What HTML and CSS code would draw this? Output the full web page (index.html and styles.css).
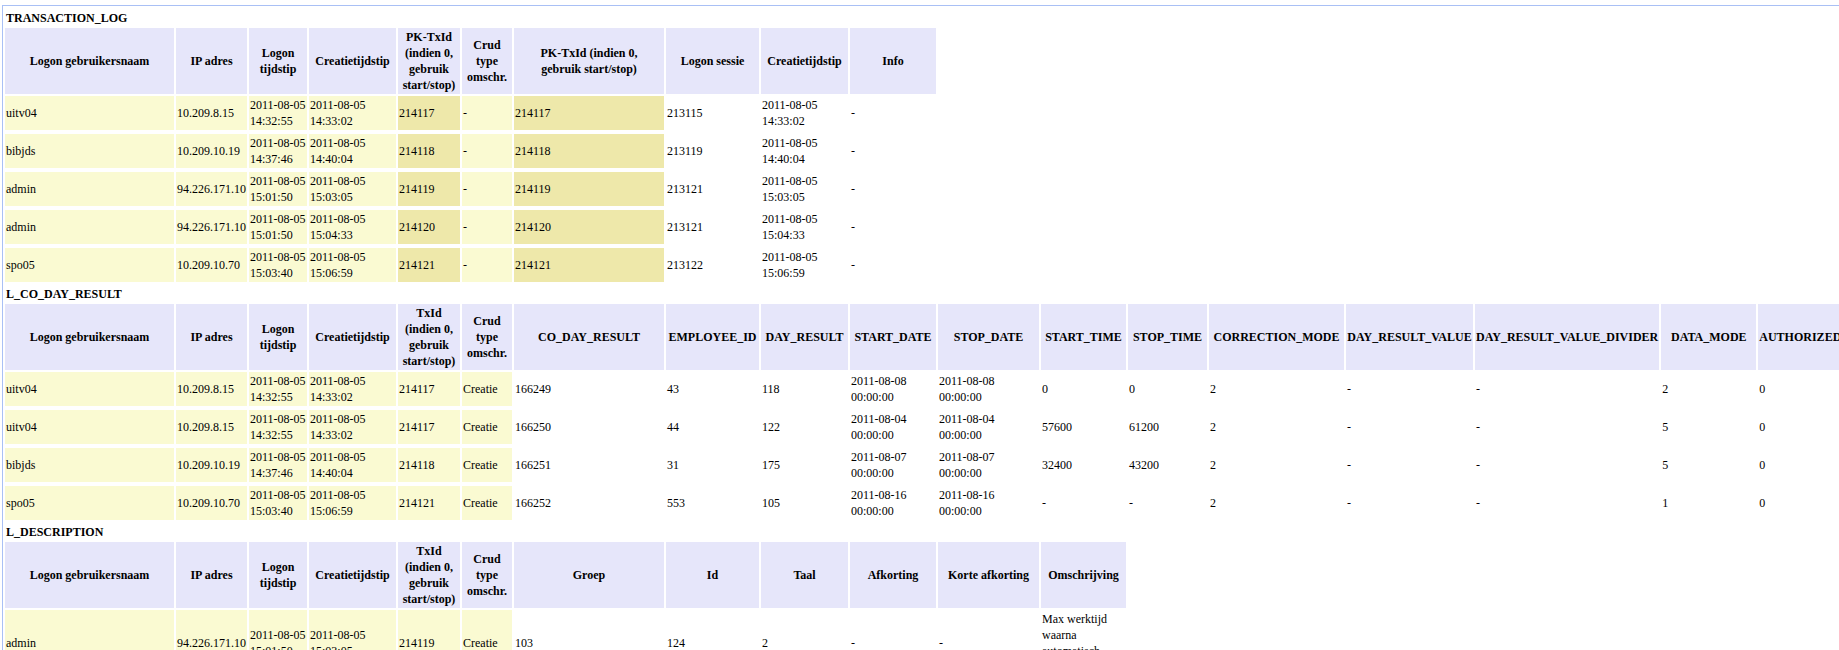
FILE: index.html
```html
<!DOCTYPE html>
<html lang="en">
<head>
  <meta charset="UTF-8">
  <title>Transactie log</title>
  <link rel="stylesheet" href="styles.css">
</head>
<body>
  <div class="log">
    <!-- TRANSACTION_LOG -->
    <h4>TRANSACTION_LOG</h4>
    <table>
      <colgroup>
        <col class="c-user"><col class="c-ip"><col class="c-logon"><col class="c-created"><col class="c-tx"><col class="c-crud">
        <col class="c-key"><col class="c-93"><col class="c-87"><col class="c-86">
      </colgroup>
      <tr>
        <th>Logon gebruikersnaam</th><th>IP adres</th><th>Logon tijdstip</th><th>Creatietijdstip</th>
        <th>PK-TxId (indien 0, gebruik start/stop)</th><th>Crud type omschr.</th>
        <th>PK-TxId (indien 0,<br>gebruik start/stop)</th><th>Logon sessie</th><th>Creatietijdstip</th><th>Info</th>
      </tr>
      <tr>
        <td class="tx">uitv04</td><td class="tx">10.209.8.15</td><td class="tx">2011-08-05 14:32:55</td><td class="tx">2011-08-05 14:33:02</td>
        <td class="pk">214117</td><td class="tx">-</td><td class="pk">214117</td><td>213115</td><td>2011-08-05 14:33:02</td><td>-</td>
      </tr>
      <tr>
        <td class="tx">bibjds</td><td class="tx">10.209.10.19</td><td class="tx">2011-08-05 14:37:46</td><td class="tx">2011-08-05 14:40:04</td>
        <td class="pk">214118</td><td class="tx">-</td><td class="pk">214118</td><td>213119</td><td>2011-08-05 14:40:04</td><td>-</td>
      </tr>
      <tr>
        <td class="tx">admin</td><td class="tx">94.226.171.10</td><td class="tx">2011-08-05 15:01:50</td><td class="tx">2011-08-05 15:03:05</td>
        <td class="pk">214119</td><td class="tx">-</td><td class="pk">214119</td><td>213121</td><td>2011-08-05 15:03:05</td><td>-</td>
      </tr>
      <tr>
        <td class="tx">admin</td><td class="tx">94.226.171.10</td><td class="tx">2011-08-05 15:01:50</td><td class="tx">2011-08-05 15:04:33</td>
        <td class="pk">214120</td><td class="tx">-</td><td class="pk">214120</td><td>213121</td><td>2011-08-05 15:04:33</td><td>-</td>
      </tr>
      <tr>
        <td class="tx">spo05</td><td class="tx">10.209.10.70</td><td class="tx">2011-08-05 15:03:40</td><td class="tx">2011-08-05 15:06:59</td>
        <td class="pk">214121</td><td class="tx">-</td><td class="pk">214121</td><td>213122</td><td>2011-08-05 15:06:59</td><td>-</td>
      </tr>
    </table>

    <!-- L_CO_DAY_RESULT -->
    <h4>L_CO_DAY_RESULT</h4>
    <table>
      <colgroup>
        <col class="c-user"><col class="c-ip"><col class="c-logon"><col class="c-created"><col class="c-tx"><col class="c-crud">
        <col class="c-key"><col class="c-93"><col class="c-87"><col class="c-86"><col class="c-101"><col class="c-85"><col class="c-79">
        <col class="c-135"><col class="c-127"><col class="c-183"><col class="c-95"><col class="c-auth">
      </colgroup>
      <tr>
        <th>Logon gebruikersnaam</th><th>IP adres</th><th>Logon tijdstip</th><th>Creatietijdstip</th>
        <th>TxId (indien 0, gebruik start/stop)</th><th>Crud type omschr.</th>
        <th>CO_DAY_RESULT</th><th>EMPLOYEE_ID</th><th>DAY_RESULT</th><th>START_DATE</th><th>STOP_DATE</th><th>START_TIME</th><th>STOP_TIME</th>
        <th>CORRECTION_MODE</th><th>DAY_RESULT_VALUE</th><th>DAY_RESULT_VALUE_DIVIDER</th><th>DATA_MODE</th><th>AUTHORIZED_BY</th>
      </tr>
      <tr>
        <td class="tx">uitv04</td><td class="tx">10.209.8.15</td><td class="tx">2011-08-05 14:32:55</td><td class="tx">2011-08-05 14:33:02</td>
        <td class="tx">214117</td><td class="tx">Creatie</td>
        <td>166249</td><td>43</td><td>118</td><td>2011-08-08 00:00:00</td><td>2011-08-08 00:00:00</td><td>0</td><td>0</td><td>2</td><td>-</td><td>-</td><td>2</td><td>0</td>
      </tr>
      <tr>
        <td class="tx">uitv04</td><td class="tx">10.209.8.15</td><td class="tx">2011-08-05 14:32:55</td><td class="tx">2011-08-05 14:33:02</td>
        <td class="tx">214117</td><td class="tx">Creatie</td>
        <td>166250</td><td>44</td><td>122</td><td>2011-08-04 00:00:00</td><td>2011-08-04 00:00:00</td><td>57600</td><td>61200</td><td>2</td><td>-</td><td>-</td><td>5</td><td>0</td>
      </tr>
      <tr>
        <td class="tx">bibjds</td><td class="tx">10.209.10.19</td><td class="tx">2011-08-05 14:37:46</td><td class="tx">2011-08-05 14:40:04</td>
        <td class="tx">214118</td><td class="tx">Creatie</td>
        <td>166251</td><td>31</td><td>175</td><td>2011-08-07 00:00:00</td><td>2011-08-07 00:00:00</td><td>32400</td><td>43200</td><td>2</td><td>-</td><td>-</td><td>5</td><td>0</td>
      </tr>
      <tr>
        <td class="tx">spo05</td><td class="tx">10.209.10.70</td><td class="tx">2011-08-05 15:03:40</td><td class="tx">2011-08-05 15:06:59</td>
        <td class="tx">214121</td><td class="tx">Creatie</td>
        <td>166252</td><td>553</td><td>105</td><td>2011-08-16 00:00:00</td><td>2011-08-16 00:00:00</td><td>-</td><td>-</td><td>2</td><td>-</td><td>-</td><td>1</td><td>0</td>
      </tr>
    </table>

    <!-- L_DESCRIPTION -->
    <h4>L_DESCRIPTION</h4>
    <table>
      <colgroup>
        <col class="c-user"><col class="c-ip"><col class="c-logon"><col class="c-created"><col class="c-tx"><col class="c-crud">
        <col class="c-key"><col class="c-93"><col class="c-87"><col class="c-86"><col class="c-101"><col class="c-85">
      </colgroup>
      <tr>
        <th>Logon gebruikersnaam</th><th>IP adres</th><th>Logon tijdstip</th><th>Creatietijdstip</th>
        <th>TxId (indien 0, gebruik start/stop)</th><th>Crud type omschr.</th>
        <th>Groep</th><th>Id</th><th>Taal</th><th>Afkorting</th><th>Korte afkorting</th><th>Omschrijving</th>
      </tr>
      <tr>
        <td class="tx">admin</td><td class="tx">94.226.171.10</td><td class="tx">2011-08-05 15:01:50</td><td class="tx">2011-08-05 15:03:05</td>
        <td class="tx">214119</td><td class="tx">Creatie</td>
        <td>103</td><td>124</td><td>2</td><td>-</td><td>-</td><td>Max werktijd waarna automatisch uitgelogd</td>
      </tr>
    </table>
  </div>
</body>
</html>
```

FILE: styles.css
```css
body {
  margin: 0;
  padding: 5px 0 0 2px;
  background-color: #fff;
  font-family: "Liberation Serif", "Times New Roman", serif;
  font-size: 12px;
  line-height: 16px;
  color: #000;
}

.log {
  border-top: 1px solid #a9c0f5;
  border-left: 1px solid #a9c0f5;
  padding-top: 4px;
}

h4 {
  margin: 0;
  padding-left: 3px;
  font-size: 12px;
  font-weight: bold;
}

table {
  border-collapse: separate;
  border-spacing: 2px;
  width: max-content;
}

th,
td {
  padding: 1px;
}

th {
  background-color: #e6e6fa;
  text-align: center;
}

td {
  border-bottom: 2px solid #fff;
  background-clip: padding-box;
}

td.tx {
  background-color: #fafad2;
}

td.pk {
  background-color: #eee8aa;
}

col {
  box-sizing: border-box;
}

.c-user { width: 169px; }
.c-ip { width: 71px; }
.c-logon { width: 58px; }
.c-created { width: 87px; }
.c-tx { width: 62px; }
.c-crud { width: 50px; }
.c-key { width: 150px; }
.c-93 { width: 93px; }
.c-87 { width: 87px; }
.c-86 { width: 86px; }
.c-101 { width: 101px; }
.c-85 { width: 85px; }
.c-79 { width: 79px; }
.c-135 { width: 135px; }
.c-127 { width: 127px; }
.c-183 { width: 183px; }
.c-95 { width: 95px; }
.c-auth { width: 100px; }
```
